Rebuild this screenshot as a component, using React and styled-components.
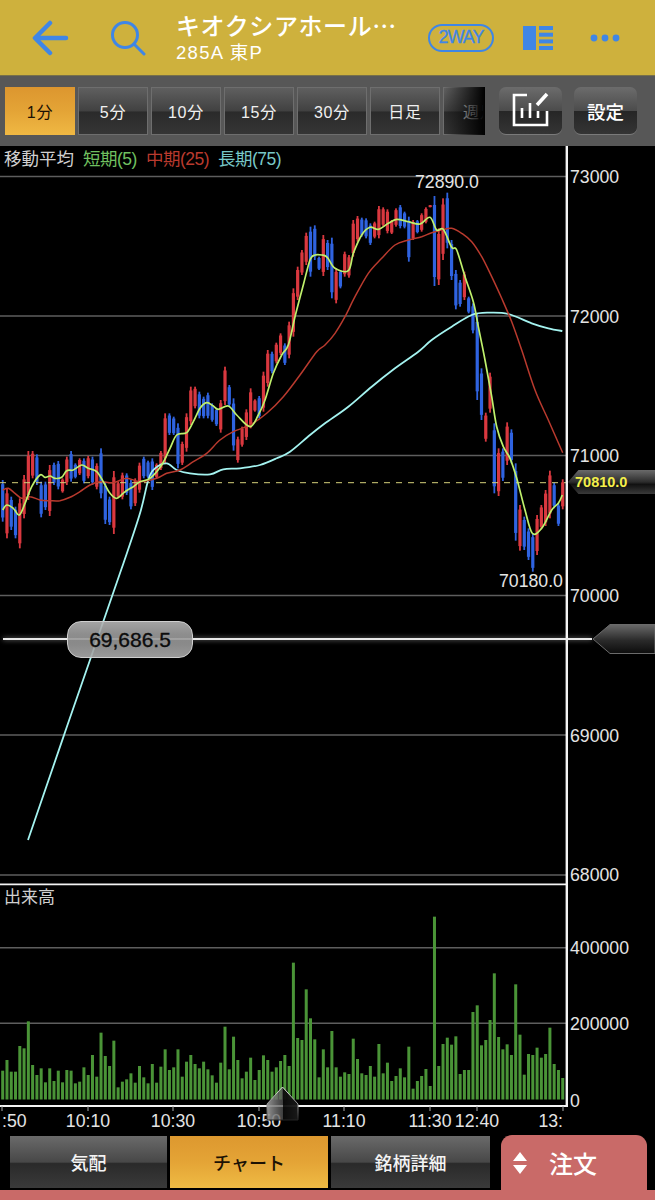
import styled, { createGlobalStyle } from "styled-components";

const GlobalStyle = createGlobalStyle`
  html, body { margin: 0; padding: 0; background: #000; }
  body { font-family: "Liberation Sans", "Noto Sans CJK JP", sans-serif; }
`;

const Page = styled.div`
  width: 655px;
  height: 1200px;
  display: flex;
  flex-direction: column;
  overflow: hidden;
  background: #000;
`;

const Header = styled.header`
  height: 75px;
  flex: none;
  display: flex;
  align-items: center;
  background: #ceb13d;
  box-sizing: border-box;
  padding-left: 32px;
`;

const HeaderIcon = styled.span`
  display: flex;
  width: ${(p) => p.$w}px;
  margin-right: ${(p) => p.$mr}px;
`;

const TitleBlock = styled.div`
  width: 252px;
  color: #fff;
  display: flex;
  flex-direction: column;
  gap: 2px;
  padding-bottom: 2px;
`;

const Title = styled.div`
  font-family: "Noto Sans CJK JP", sans-serif;
  font-size: 24px;
  font-weight: 500;
  line-height: 30px;
  letter-spacing: 0.6px;
  white-space: nowrap;
`;

const Sub = styled.div`
  font-size: 18.5px;
  line-height: 22px;
  letter-spacing: 1.3px;
`;

const WayPill = styled.span`
  width: 66px;
  height: 28px;
  box-sizing: border-box;
  border: 2px solid #3f86e6;
  border-radius: 15px;
  color: #3f86e6;
  font-size: 18px;
  letter-spacing: -1px;
  -webkit-text-stroke: 0.3px #3f86e6;
  display: flex;
  align-items: center;
  justify-content: center;
  margin-right: 29px;
`;

const Toolbar = styled.div`
  height: 71px;
  flex: none;
  display: flex;
  align-items: center;
  background: #575757;
  border-top: 1px solid #77704a;
  box-sizing: border-box;
  padding-left: 5px;
`;

const Periods = styled.div`
  display: flex;
  gap: 3px;
  width: 480px;
  margin-right: 14px;
  position: relative;
`;

const PeriodButton = styled.div`
  width: ${(p) => p.$w || 70}px;
  height: 48px;
  flex: none;
  box-sizing: border-box;
  display: flex;
  align-items: center;
  white-space: nowrap;
  font-size: 16px;
  letter-spacing: 0.8px;
  color: ${(p) => (p.$active ? "#1c1204" : "#f0f0f0")};
  border: ${(p) => (p.$active ? "none" : "1px solid #6e6e6e")};
  background: ${(p) =>
    p.$active
      ? "linear-gradient(#dc962f, #e4a436 50%, #f0b843)"
      : "linear-gradient(#5f5f5f, #414141 50%, #2a2a2a 52%, #353535)"};
  overflow: hidden;
  justify-content: ${(p) => (p.$clip ? "flex-start" : "center")};
  padding-left: ${(p) => (p.$clip ? "19px" : "0")};
`;

const Fade = styled.div`
  position: absolute;
  left: 439px;
  top: 0;
  width: 41px;
  height: 48px;
  background: linear-gradient(90deg, rgba(0, 0, 0, 0), #000);
`;

const ToolButton = styled.div`
  width: 63px;
  height: 48px;
  margin-right: ${(p) => p.$mr || 0}px;
  box-sizing: border-box;
  border-radius: 7px;
  border-bottom: 1px solid #7a7a7a;
  background: linear-gradient(#6c6c6c, #4c4c4c 50%, #262626 52%, #343434);
  color: #fff;
  display: flex;
  align-items: center;
  justify-content: center;
  font-size: 18.5px;
  font-weight: 500;
`;

const ChartArea = styled.main`
  position: relative;
  height: 989px;
  flex: none;
  background: #000;
`;

const ChartSvg = styled.svg`
  display: block;
  width: 655px;
  height: 989px;
`;

const Legend = styled.div`
  position: absolute;
  left: 4px;
  top: 2px;
  display: flex;
  gap: 9px;
  font-size: 17.5px;
  line-height: 22px;
  color: #d0d0d0;
`;

const LegendItem = styled.span`
  color: ${(p) => p.$color};
  letter-spacing: -0.5px;
`;

const CrossLine = styled.div`
  position: absolute;
  left: 3px;
  top: 492px;
  width: 589px;
  height: 2px;
  background: #e8e8e8;
  box-shadow: 0 0 5px rgba(255, 255, 255, 0.55);
`;

const PricePill = styled.div`
  position: absolute;
  left: 67px;
  top: 475px;
  width: 126px;
  height: 37px;
  box-sizing: border-box;
  border: 1px solid #cfcfcf;
  border-radius: 14px;
  background: linear-gradient(rgba(180, 180, 180, 0.9), rgba(150, 150, 150, 0.88) 50%, rgba(170, 170, 170, 0.9));
  color: #0c0c0c;
  font-size: 21px;
  -webkit-text-stroke: 0.35px #0c0c0c;
  display: flex;
  align-items: center;
  justify-content: center;
`;

const HandleSlot = styled.div`
  position: absolute;
  left: ${(p) => p.$left}px;
  top: ${(p) => p.$top}px;
  display: flex;
`;

const LastTag = styled.div`
  position: absolute;
  left: 568px;
  top: 324px;
  width: 87px;
  height: 24px;
  box-sizing: border-box;
  padding-left: 7px;
  background: linear-gradient(#6a6a6a, #2c2c2c 50%, #111 60%, #3a3a3a);
  clip-path: polygon(0 50%, 12% 0, 100% 0, 100% 100%, 12% 100%);
  color: #f4ef4a;
  font-size: 14.5px;
  font-weight: 700;
  line-height: 24px;
`;

const Footer = styled.footer`
  flex: none;
  height: 65px;
  display: flex;
  flex-direction: column;
  background: #000;
`;

const FooterRow = styled.div`
  height: 55px;
  display: flex;
  align-items: flex-end;
  padding-left: 10px;
`;

const Tab = styled.div`
  width: ${(p) => p.$w}px;
  margin-right: ${(p) => p.$mr || 0}px;
  height: 52px;
  margin-bottom: 2px;
  box-sizing: border-box;
  display: flex;
  align-items: center;
  justify-content: center;
  font-size: 18px;
  font-weight: 500;
  color: ${(p) => (p.$active ? "#1c1204" : "#f4f4f4")};
  background: ${(p) =>
    p.$active
      ? "linear-gradient(#dd982f, #e4a436 50%, #efbb44)"
      : "linear-gradient(#6a6a6a, #484848 50%, #2a2a2a 53%, #3a3a3a)"};
`;

const OrderButton = styled.div`
  width: 146px;
  height: 55px;
  margin-left: 11px;
  box-sizing: border-box;
  padding-left: 12px;
  background: #c96a68;
  border-radius: 11px 11px 0 0;
  display: flex;
  align-items: center;
  gap: 22px;
  color: #fff;
  font-size: 24px;
  font-weight: 500;
`;

const PinkStrip = styled.div`
  height: 10px;
  background: #c96a68;
`;

// bars read off the picture: colour, top, bottom (in the 3x crop's pixels)
const candlesLeft = "b930:1055 r955:1105 b980:1080 b1010:1105 r985:1135 r915:1045 r843:990 r843:925 b853:945 b935:1042 b935:1020 r885:1038 b878:945 b873:958 r925:968 r860:945 b843:935 b880:925 r865:915 b865:940 r858:925 b860:945 r880:958 b835:985 b935:1062 b980:1065 r903:1092 r935:985 r908:988 b910:975 b930:1018 r925:1008 r878:968 b860:925 b872:925 b865:960 r880:925 r843:900 r730:880 b730:795 b740:795 b760:895 r815:885 r730:845 r650:765 r650:715 b665:745 b680:745 b668:745 b700:755 b715:768 r690:788 r590:705 b645:710 b685:842 r800:878 r770:830 r718:810 r655:775 r688:725 b678:745 r605:725 r540:650 b545:610 r518:580 r490:555 b520:585 r455:565 r355:500 r290:390 r240:315 r188:285 b170:320 b166:270 b260:300 r195:318";
const candlesRight = "b210:300 b203:385 r295:400 b300:355 r245:320 r255:323 r150:260 r138:215 b143:200 b145:205 b160:225 r155:205 r108:205 r112:170 r118:190 r150:192 r115:170 b105:175 b125:175 b140:275 r150:210 b150:190 r130:185 r112:160 r105:112 b78:348 r175:345 r85:270 b68:235 b210:330 b300:418 b330:410 r305:390 b380:430 b400:490 b430:690 b595:750 r728:815 r608:728 b760:970 r835:978 b835:933 r757:885 b778:880 b880:1112 r1005:1142 b1040:1140 b1075:1170 b1090:1205 r1035:1155 r1005:1078 r960:1068 r902:1045 b938:1015 b1000:1068 r928:1018";

const candles = `${candlesLeft} ${candlesRight}`.split(" ").map((s, i) => {
  const [top, bottom] = s.slice(1).split(":").map(Number);
  return { x: barX(i), up: s[0] === "r", top: 170 + top / 3, bottom: 170 + bottom / 3 };
});

const volumeTops = [
  572, 540, 575, 575, 498, 505, 424, 555, 585, 565, 607, 565, 603, 572, 607, 570, 572, 610, 605, 562,
  585, 525, 590, 458, 528, 558, 482, 622, 605, 598, 580, 608, 558, 592, 610, 552, 608, 560, 508, 570,
  562, 508, 590, 545, 525, 552, 565, 545, 568, 586, 608, 548, 440, 568, 470, 540, 595, 575, 533, 600,
  570, 526, 540, 575, 562, 543, 525, 558, 248, 474, 480, 328, 415, 478, 592, 508, 562, 453, 562, 590,
  577, 582, 476, 537, 580, 585, 558, 590, 492, 580, 548, 603, 588, 565, 592, 500, 626, 603, 588, 567,
  618, 110, 558, 492, 473, 494, 469, 582, 570, 570, 396, 376, 496, 480, 420, 280, 471, 508, 493, 525,
  313, 464, 584, 522, 525, 503, 533, 522, 443, 552, 570, 594,
];

function barX(i) {
  return 2.7 + i * 4.275;
}

// crop coordinates to page coordinates, then a smooth curve through the points
const toPath = (left, right = []) => {
  const pts = [
    ...left.map(([x, y]) => [x / 3, 170 + y / 3]),
    ...right.map(([x, y]) => [325 + x / 3, 170 + y / 3]),
  ];
  let d = `M${pts[0][0].toFixed(1)} ${pts[0][1].toFixed(1)}`;
  for (let i = 0; i < pts.length - 1; i++) {
    const p0 = pts[i - 1] || pts[i];
    const p1 = pts[i];
    const p2 = pts[i + 1];
    const p3 = pts[i + 2] || p2;
    const c1 = [p1[0] + (p2[0] - p0[0]) / 6, p1[1] + (p2[1] - p0[1]) / 6];
    const c2 = [p2[0] - (p3[0] - p1[0]) / 6, p2[1] - (p3[1] - p1[1]) / 6];
    d += `C${c1[0].toFixed(1)} ${c1[1].toFixed(1)} ${c2[0].toFixed(1)} ${c2[1].toFixed(1)} ${p2[0].toFixed(1)} ${p2[1].toFixed(1)}`;
  }
  return d;
};

const shortMa = toPath(
  [[8,1020],[20,1005],[40,1015],[58,1035],[75,1000],[95,950],[120,915],[135,922],[150,918],[165,925],[185,922],[200,902],[220,900],[245,885],[265,895],[290,905],[310,935],[330,970],[350,985],[375,965],[400,950],[420,935],[450,925],[485,885],[510,835],[530,795],[560,788],[580,755],[600,715],[620,698],[640,708],[655,718],[685,708],[710,735],[750,770],[775,735],[795,690],[820,610],[845,555],[865,525],[885,440],[910,345],[930,270],[945,255],[965,255]],
  [[7,262],[30,295],[70,302],[85,250],[110,195],[135,172],[160,178],[190,160],[215,148],[250,155],[285,162],[315,142],[335,180],[355,178],[380,232],[395,240],[420,320],[445,395],[460,470],[480,570],[500,680],[515,770],[535,830],[555,865],[575,925],[600,1020],[622,1090],[650,1075],[680,1020],[700,1000],[712,975]]
);

const midMa = toPath(
  [[8,960],[25,955],[45,970],[65,985],[90,980],[120,990],[150,992],[180,992],[210,982],[240,965],[270,945],[300,935],[340,938],[380,925],[420,935],[470,925],[500,910],[540,900],[580,875],[620,850],[660,810],[700,785],[750,765],[800,730],[850,680],[900,615],[950,545]],
  [[0,525],[30,490],[60,440],[90,380],[130,310],[170,265],[210,225],[250,210],[290,200],[320,188],[350,180],[380,175],[410,190],[440,215],[470,260],[500,320],[530,385],[560,455],[590,540],[630,660],[670,750],[713,848]]
);

const longMa = toPath(
  [[84,2010],[200,1672],[365,1195],[420,1030],[445,930],[465,895],[500,880],[530,900],[570,910],[630,913],[670,898],[720,895],[780,885],[830,865],[870,845],[930,795]],
  [[0,760],[70,710],[140,650],[210,595],[280,545],[320,510],[380,470],[440,435],[490,428],[550,432],[620,460],[670,475],[712,483]]
);

const priceGrid = [176.5, 316, 455.5, 595.5, 735, 875];
const priceLabels = [
  [73000, 183], [72000, 323], [71000, 462], [70000, 602], [69000, 742], [68000, 881],
];
const volumeLabels = [
  ["400000", 954], ["200000", 1030], ["0", 1107],
];
const timeLabels = [
  [":50", 2, "start"], ["10:10", 88, "middle"], ["10:30", 173, "middle"], ["10:50", 259, "middle"],
  ["11:10", 344, "middle"], ["11:30", 430, "middle"], ["12:40", 477, "middle"], ["13:", 563, "end"],
];
const periods = ["5分", "10分", "15分", "30分", "日足"];

function Chart() {
  return (
    <ChartSvg viewBox="0 146 655 989">
      <g stroke="#5e5e5e" strokeWidth="1.4">
        {priceGrid.map((y) => (
          <line key={y} x1="0" x2="566" y1={y} y2={y} />
        ))}
        <line x1="0" x2="566" y1="947.7" y2="947.7" />
        <line x1="0" x2="566" y1="1023.3" y2="1023.3" />
      </g>
      {candles.map((c) => {
        const inset = (c.bottom - c.top) * 0.1;
        const color = c.up ? "#d9383f" : "#2f63e0";
        return (
          <g key={c.x} fill={color}>
            <rect x={c.x - 0.9} y={c.top} width="1.8" height={c.bottom - c.top} />
            <rect x={c.x - 1.6} y={c.top + inset} width="3.2" height={c.bottom - c.top - inset * 2} />
          </g>
        );
      })}
      <line x1="0" x2="566" y1="482.7" y2="482.7" stroke="#d6d07a" strokeWidth="1" strokeDasharray="6 6" />
      <path d={longMa} fill="none" stroke="#a4f3f0" strokeWidth="1.8" />
      <path d={midMa} fill="none" stroke="#b93a2e" strokeWidth="1.5" />
      <path d={shortMa} fill="none" stroke="#bff06c" strokeWidth="1.7" />
      {volumeTops.map((t, i) => {
        const top = 880 + t / 3;
        return (
          <rect key={i} x={barX(i) - 1.5} y={top} width="3" height={1099.5 - top} fill="#4a9437" />
        );
      })}
      <g stroke="#f4f4f4">
        <line x1="566.8" x2="566.8" y1="146" y2="1107" strokeWidth="2.4" />
        <line x1="0" x2="567" y1="884.3" y2="884.3" strokeWidth="1.8" />
        <line x1="0" x2="567" y1="1106" y2="1106" strokeWidth="2.2" />
        {timeLabels.map(([t, x]) => (
          <line key={t} x1={x} x2={x} y1="1106" y2="1111" strokeWidth="1" stroke="#aaa" />
        ))}
      </g>
      <g fill="#e4e4e4" fontSize="17.7">
        <text x="415" y="188">72890.0</text>
        <text x="499" y="587">70180.0</text>
        {priceLabels.map(([v, y]) => (
          <text key={v} x="570" y={y}>{v}</text>
        ))}
        {volumeLabels.map(([v, y]) => (
          <text key={v} x="570" y={y}>{v}</text>
        ))}
        {timeLabels.map(([t, x, anchor]) => (
          <text key={t} x={x} y="1127" textAnchor={anchor}>{t}</text>
        ))}
        <text x="4" y="903" fontSize="17" fill="#d0d0d0">出来高</text>
      </g>
    </ChartSvg>
  );
}

function RightHandle() {
  return (
    <svg width="63" height="30" viewBox="0 0 63 30">
      <defs>
        <linearGradient id="rightHandle" x1="0" x2="0" y1="0" y2="1">
          <stop offset="0" stopColor="#6a6a6a" />
          <stop offset="0.55" stopColor="#2a2a2a" />
          <stop offset="1" stopColor="#0c0c0c" />
        </linearGradient>
      </defs>
      <path d="M1 15L18 .5H63V29.5H18z" fill="url(#rightHandle)" stroke="#6b6b6b" />
    </svg>
  );
}

function BottomHandle() {
  return (
    <svg width="33" height="35" viewBox="0 0 33 35">
      <defs>
        <linearGradient id="bottomHandle" x1="0" x2="1" y1="0" y2="0">
          <stop offset="0" stopColor="#999" stopOpacity="0.95" />
          <stop offset="0.5" stopColor="#555" stopOpacity="0.75" />
          <stop offset="0.52" stopColor="#0a0a0a" stopOpacity="0.95" />
          <stop offset="1" stopColor="#1a1a1a" stopOpacity="0.95" />
        </linearGradient>
        <linearGradient id="bottomEdge" x1="0" x2="0" y1="0" y2="1">
          <stop offset="0" stopColor="#ddd" />
          <stop offset="0.6" stopColor="#888" />
          <stop offset="1" stopColor="#222" />
        </linearGradient>
      </defs>
      <path d="M16.5 1L32 18V34H1V18z" fill="url(#bottomHandle)" stroke="url(#bottomEdge)" />
    </svg>
  );
}

export default function App() {
  return (
    <Page>
      <GlobalStyle />
      <Header>
        <HeaderIcon $w={38} $mr={40}>
          <svg width="38" height="36" viewBox="0 0 38 36" fill="none" stroke="#3f86e6" strokeWidth="4.5" strokeLinecap="round" strokeLinejoin="round">
            <path d="M34 18H4M18 3L3 18l15 15" />
          </svg>
        </HeaderIcon>
        <HeaderIcon $w={36} $mr={30}>
          <svg width="36" height="36" viewBox="0 0 36 36" fill="none" stroke="#3f86e6" strokeWidth="3" strokeLinecap="round">
            <circle cx="15" cy="15" r="12.5" />
            <path d="M24 24l10 10" />
          </svg>
        </HeaderIcon>
        <TitleBlock>
          <Title>キオクシアホール…</Title>
          <Sub>285A 東P</Sub>
        </TitleBlock>
        <WayPill>2WAY</WayPill>
        <HeaderIcon $w={30} $mr={37}>
          <svg width="30" height="24" viewBox="0 0 30 24" fill="#3f86e6">
            <rect x="0" y="0" width="13" height="24" />
            <rect x="16" y="0" width="14" height="4" />
            <rect x="16" y="6.7" width="14" height="4" />
            <rect x="16" y="13.4" width="14" height="4" />
            <rect x="16" y="20" width="14" height="4" />
          </svg>
        </HeaderIcon>
        <HeaderIcon $w={30} $mr={0}>
          <svg width="30" height="8" viewBox="0 0 30 8" fill="#3f86e6">
            <circle cx="4" cy="4" r="3.4" />
            <circle cx="15" cy="4" r="3.4" />
            <circle cx="26" cy="4" r="3.4" />
          </svg>
        </HeaderIcon>
      </Header>
      <Toolbar>
        <Periods>
          <PeriodButton $active>1分</PeriodButton>
          {periods.map((p) => (
            <PeriodButton key={p}>{p}</PeriodButton>
          ))}
          <PeriodButton $w={41} $clip>週足</PeriodButton>
          <Fade />
        </Periods>
        <ToolButton $mr={12}>
          <svg width="63" height="48" viewBox="0 0 63 48" fill="none" stroke="#fff" strokeWidth="2.6">
            <path d="M28 8H15V38H48V24" />
            <path d="M23 21V31M31 16V31M39 24V31" />
            <path d="M38 18L48 7" strokeWidth="3.6" />
          </svg>
        </ToolButton>
        <ToolButton>設定</ToolButton>
      </Toolbar>
      <ChartArea>
        <Chart />
        <Legend>
          <span>移動平均</span>
          <LegendItem $color="#70c060">短期(5)</LegendItem>
          <LegendItem $color="#b93a2e">中期(25)</LegendItem>
          <LegendItem $color="#78c8c8">長期(75)</LegendItem>
        </Legend>
        <CrossLine />
        <PricePill>69,686.5</PricePill>
        <HandleSlot $left={592} $top={478}>
          <RightHandle />
        </HandleSlot>
        <LastTag>70810.0</LastTag>
        <HandleSlot $left={266} $top={940}>
          <BottomHandle />
        </HandleSlot>
      </ChartArea>
      <Footer>
        <FooterRow>
          <Tab $w={157} $mr={3}>気配</Tab>
          <Tab $w={158} $mr={3} $active>チャート</Tab>
          <Tab $w={159}>銘柄詳細</Tab>
          <OrderButton>
            <svg width="14" height="26" viewBox="0 0 14 26" fill="#fff">
              <path d="M7 2l7 9H0zM7 24l7-9H0z" />
            </svg>
            注文
          </OrderButton>
        </FooterRow>
        <PinkStrip />
      </Footer>
    </Page>
  );
}
